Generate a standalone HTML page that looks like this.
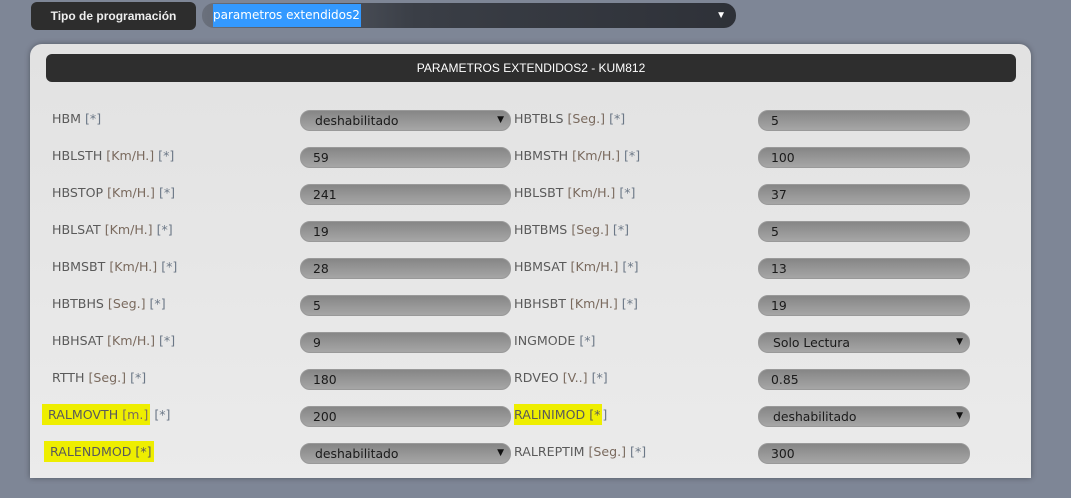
<!DOCTYPE html>
<html><head><meta charset="utf-8"><style>
*{margin:0;padding:0;box-sizing:border-box}
body{width:1071px;height:498px;background:#7e8696;font-family:"Liberation Sans","DejaVu Sans",sans-serif;position:relative;overflow:hidden}
.tipo{position:absolute;left:31px;top:2px;width:165px;height:28px;background:#2d2d2d;border-radius:6px;color:#eee;font-weight:bold;font-size:12px;line-height:28px;text-align:center}
.sel{position:absolute;left:202px;top:3px;width:534px;height:25px;border-radius:12px;background:linear-gradient(90deg,#6a707c,#3a3e46 40%,#2e3138);}
.sel .hl{position:absolute;left:11px;top:1px;height:23px;width:148px;background:#3399ff;color:#fff;line-height:23px;font-family:"DejaVu Sans",sans-serif;font-size:12px;white-space:nowrap;overflow:hidden}
.sel .ar{position:absolute;right:10px;top:7px;color:#fff;font-size:10px}
.panel{position:absolute;left:30px;top:44px;width:1001px;height:434px;background:linear-gradient(#e2e2e2,#ebebeb);border-radius:12px 12px 0 0;box-shadow:0 0 6px rgba(0,0,0,.35)}
.hdr{position:absolute;left:16px;top:10px;width:970px;height:28px;background:#2e2e2e;border-radius:6px;color:#fff;font-size:12px;line-height:28px;text-align:center}
.lbl{position:absolute;font-family:"DejaVu Sans",sans-serif;font-size:12.6px;color:#5a5a5a;line-height:18px;white-space:nowrap}
.lbl .u{color:#7a6a5e}.lbl .s{color:#6b7786}
.hy{background:#eeee00;padding:3px 2px}
.in{position:absolute;height:21px;border-radius:10px;background:linear-gradient(#868686,#a6a6a6);border:1px solid #999;font-family:"DejaVu Sans",sans-serif;font-size:12.4px;color:#1a1a1a;line-height:19px;padding-left:12px;white-space:nowrap}
.in.s{padding-left:14px}
.in .a{position:absolute;right:6px;top:0;font-size:9px;color:#111}
</style></head><body>
<div class="tipo">Tipo de programación</div>
<div class="sel"><div class="hl">parametros extendidos2</div><span class="ar">▼</span></div>
<div class="panel"><div class="hdr">PARAMETROS EXTENDIDOS2 - KUM812</div></div>

<div class="lbl" style="left:52px;top:110px">HBM <span class="s">[*]</span></div>
<div class="in s" style="left:300px;top:110px;width:211px">deshabilitado<span class="a">▼</span></div>
<div class="lbl" style="left:514px;top:110px">HBTBLS <span class="u">[Seg.]</span> <span class="s">[*]</span></div>
<div class="in" style="left:758px;top:110px;width:212px">5</div>

<div class="lbl" style="left:52px;top:147px">HBLSTH <span class="u">[Km/H.]</span> <span class="s">[*]</span></div>
<div class="in" style="left:300px;top:147px;width:211px">59</div>
<div class="lbl" style="left:514px;top:147px">HBMSTH <span class="u">[Km/H.]</span> <span class="s">[*]</span></div>
<div class="in" style="left:758px;top:147px;width:212px">100</div>

<div class="lbl" style="left:52px;top:184px">HBSTOP <span class="u">[Km/H.]</span> <span class="s">[*]</span></div>
<div class="in" style="left:300px;top:184px;width:211px">241</div>
<div class="lbl" style="left:514px;top:184px">HBLSBT <span class="u">[Km/H.]</span> <span class="s">[*]</span></div>
<div class="in" style="left:758px;top:184px;width:212px">37</div>

<div class="lbl" style="left:52px;top:221px">HBLSAT <span class="u">[Km/H.]</span> <span class="s">[*]</span></div>
<div class="in" style="left:300px;top:221px;width:211px">19</div>
<div class="lbl" style="left:514px;top:221px">HBTBMS <span class="u">[Seg.]</span> <span class="s">[*]</span></div>
<div class="in" style="left:758px;top:221px;width:212px">5</div>

<div class="lbl" style="left:52px;top:258px">HBMSBT <span class="u">[Km/H.]</span> <span class="s">[*]</span></div>
<div class="in" style="left:300px;top:258px;width:211px">28</div>
<div class="lbl" style="left:514px;top:258px">HBMSAT <span class="u">[Km/H.]</span> <span class="s">[*]</span></div>
<div class="in" style="left:758px;top:258px;width:212px">13</div>

<div class="lbl" style="left:52px;top:295px">HBTBHS <span class="u">[Seg.]</span> <span class="s">[*]</span></div>
<div class="in" style="left:300px;top:295px;width:211px">5</div>
<div class="lbl" style="left:514px;top:295px">HBHSBT <span class="u">[Km/H.]</span> <span class="s">[*]</span></div>
<div class="in" style="left:758px;top:295px;width:212px">19</div>

<div class="lbl" style="left:52px;top:332px">HBHSAT <span class="u">[Km/H.]</span> <span class="s">[*]</span></div>
<div class="in" style="left:300px;top:332px;width:211px">9</div>
<div class="lbl" style="left:514px;top:332px">INGMODE <span class="s">[*]</span></div>
<div class="in s" style="left:758px;top:332px;width:212px">Solo Lectura<span class="a">▼</span></div>

<div class="lbl" style="left:52px;top:369px">RTTH <span class="u">[Seg.]</span> <span class="s">[*]</span></div>
<div class="in" style="left:300px;top:369px;width:211px">180</div>
<div class="lbl" style="left:514px;top:369px">RDVEO <span class="u">[V..]</span> <span class="s">[*]</span></div>
<div class="in" style="left:758px;top:369px;width:212px">0.85</div>

<div class="lbl" style="left:42px;top:406px"><span class="hy">&nbsp;RALMOVTH <span class="u">[m.]</span></span> <span class="s">[*]</span></div>
<div class="in" style="left:300px;top:406px;width:211px">200</div>
<div class="lbl" style="left:514px;top:406px"><span class="hy" style="padding-left:0">RALINIMOD [*</span><span class="s">]</span></div>
<div class="in s" style="left:758px;top:406px;width:212px">deshabilitado<span class="a">▼</span></div>

<div class="lbl" style="left:44px;top:443px"><span class="hy">&nbsp;RALENDMOD [*]</span></div>
<div class="in s" style="left:300px;top:443px;width:211px">deshabilitado<span class="a">▼</span></div>
<div class="lbl" style="left:514px;top:443px">RALREPTIM <span class="u">[Seg.]</span> <span class="s">[*]</span></div>
<div class="in" style="left:758px;top:443px;width:212px">300</div>
</body></html>
